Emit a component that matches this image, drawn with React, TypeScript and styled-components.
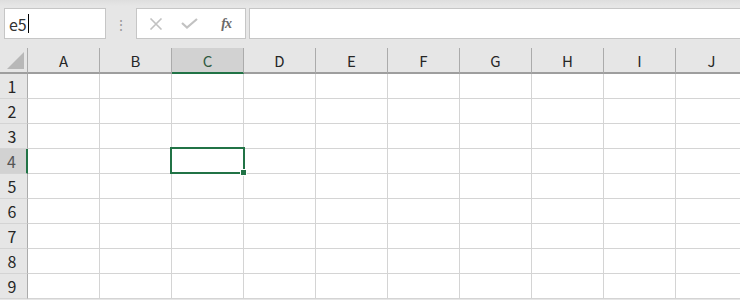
import styled, { createGlobalStyle } from "styled-components";

const COLUMNS = ["A", "B", "C", "D", "E", "F", "G", "H", "I", "J"];
const ROWS = [1, 2, 3, 4, 5, 6, 7, 8, 9];
const ACTIVE_COL = "C";
const ACTIVE_ROW = 4;
const GREEN = "#217346";

const GlobalStyle = createGlobalStyle`
  html, body {
    margin: 0;
    padding: 0;
    background: #ffffff;
    overflow: hidden;
  }
  body {
    font-family: "Noto Sans CJK JP", "Noto Sans", "Liberation Sans", sans-serif;
  }
`;

export default function App() {
  return (
    <>
      <GlobalStyle />
      <Window>
        <FormulaBar>
          <NameBox>
            e5
            <Caret />
          </NameBox>
          <Grip>⋮</Grip>
          <ButtonGroup>
            <BarButton>
              <svg width="14" height="12" viewBox="0 0 14 12">
                <path d="M1.5 0.5 L12.5 11.5 M12.5 0.5 L1.5 11.5" stroke="#c2c2c2" strokeWidth="1.6" />
              </svg>
            </BarButton>
            <BarButton>
              <svg width="17" height="11" viewBox="0 0 17 11">
                <path d="M1 5 L6 9.5 L16 1" fill="none" stroke="#c2c2c2" strokeWidth="2.2" />
              </svg>
            </BarButton>
            <FxButton>fx</FxButton>
          </ButtonGroup>
          <FormulaInput />
        </FormulaBar>
        <Sheet>
          <Corner>
            <CornerTriangle />
          </Corner>
          {COLUMNS.map((c) => (
            <ColHeader key={c} $active={c === ACTIVE_COL}>
              {c}
            </ColHeader>
          ))}
          {ROWS.map((r) => (
            <Row key={r} r={r} />
          ))}
        </Sheet>
      </Window>
    </>
  );
}

function Row({ r }: { r: number }) {
  return (
    <>
      <RowHeader $active={r === ACTIVE_ROW}>{r}</RowHeader>
      {COLUMNS.map((c) => (
        <Cell key={c}>
          {r === ACTIVE_ROW && c === ACTIVE_COL && (
            <Selection>
              <FillHandle />
            </Selection>
          )}
        </Cell>
      ))}
    </>
  );
}

const Window = styled.div`
  width: 740px;
  height: 300px;
  display: flex;
  flex-direction: column;
  background: #e6e6e6;
  overflow: hidden;
`;

const FormulaBar = styled.div`
  height: 48px;
  box-sizing: border-box;
  padding: 8px 0 9px 4px;
  display: flex;
  align-items: stretch;
  background: linear-gradient(#dedede, #e6e6e6 6px);
`;

const NameBox = styled.div`
  width: 102px;
  box-sizing: border-box;
  background: #ffffff;
  border: 1px solid #c6c6c6;
  display: flex;
  align-items: center;
  padding-left: 4px;
  font-size: 16px;
  color: #333333;
`;

const Caret = styled.span`
  display: inline-block;
  width: 1px;
  height: 19px;
  margin-left: 1px;
  background: #000000;
`;

const Grip = styled.div`
  width: 30px;
  display: flex;
  align-items: center;
  justify-content: center;
  color: #9a9a9a;
  font-size: 14px;
`;

const ButtonGroup = styled.div`
  width: 110px;
  box-sizing: border-box;
  background: #ffffff;
  border: 1px solid #c6c6c6;
  display: flex;
  align-items: center;
  justify-content: space-around;
  padding: 0 2px 0 2px;
`;

const BarButton = styled.div`
  width: 30px;
  display: flex;
  align-items: center;
  justify-content: center;
`;

const FxButton = styled.div`
  width: 30px;
  text-align: center;
  font-family: "Liberation Serif", serif;
  font-style: italic;
  font-weight: bold;
  font-size: 14px;
  color: #6a6a6a;
  letter-spacing: -1px;
  padding-left: 3px;
`;

const FormulaInput = styled.div`
  flex: 1;
  margin-left: 3px;
  background: #ffffff;
  border: 1px solid #c6c6c6;
  border-right: none;
`;

const Sheet = styled.div`
  display: grid;
  grid-template-columns: 28px repeat(10, 72px);
  grid-template-rows: 26px repeat(9, 25px);
  background: #ffffff;
`;

const Corner = styled.div`
  position: relative;
  background: #e6e6e6;
  border-right: 1px solid #ababab;
  border-bottom: 2px solid #9e9e9e;
  box-sizing: border-box;
`;

const CornerTriangle = styled.div`
  position: absolute;
  right: 3px;
  bottom: 3px;
  width: 0;
  height: 0;
  border-left: 17px solid transparent;
  border-bottom: 17px solid #b8b8b8;
`;

const ColHeader = styled.div<{ $active?: boolean }>`
  box-sizing: border-box;
  background: ${(p) => (p.$active ? "#d2d2d2" : "#e6e6e6")};
  border-right: 1px solid #ababab;
  border-bottom: 2px solid ${(p) => (p.$active ? GREEN : "#9e9e9e")};
  display: flex;
  align-items: center;
  justify-content: center;
  font-size: 15px;
  color: ${(p) => (p.$active ? "#2f5a40" : "#262626")};
  padding-top: 1px;
`;

const RowHeader = styled.div<{ $active?: boolean }>`
  box-sizing: border-box;
  background: ${(p) => (p.$active ? "#d2d2d2" : "#e6e6e6")};
  border-right: ${(p) => (p.$active ? `2px solid ${GREEN}` : "1px solid #ababab")};
  border-bottom: 1px solid #d4d4d4;
  display: flex;
  align-items: center;
  justify-content: center;
  padding-right: 3px;
  font-size: 16px;
  color: ${(p) => (p.$active ? "#555555" : "#262626")};
`;

const Cell = styled.div`
  position: relative;
  box-sizing: border-box;
  border-right: 1px solid #d4d4d4;
  border-bottom: 1px solid #d4d4d4;
`;

const Selection = styled.div`
  position: absolute;
  left: -2px;
  top: -2px;
  right: -2px;
  bottom: -1px;
  border: 2px solid ${GREEN};
  z-index: 2;
`;

const FillHandle = styled.div`
  position: absolute;
  right: -4px;
  bottom: -4px;
  width: 5px;
  height: 5px;
  background: ${GREEN};
  border: 1px solid #ffffff;
`;
